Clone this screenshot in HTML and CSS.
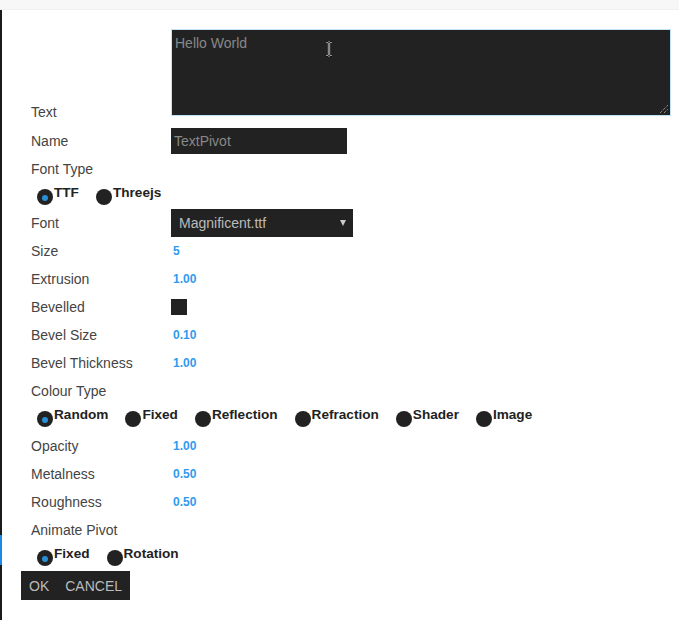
FILE: index.html
```html
<!DOCTYPE html>
<html>
<head>
<meta charset="utf-8">
<link rel="stylesheet" href="styles.css">
</head>
<body>
<div class="topbar"></div>
<div class="panel">
  <div class="edge-mark"></div>
  <form class="form">
    <div class="row row-text">
      <label class="label">Text</label>
      <div class="ta-wrap">
        <textarea class="textarea">Hello World</textarea>
        <svg class="grip" width="10" height="10" viewBox="0 0 10 10"><path d="M1 9 L9 1 M5 9 L9 5" stroke="#bbb" stroke-width="1" stroke-dasharray="1 1"/></svg>
        <svg class="ibeam" width="8" height="16" viewBox="0 0 8 16"><path d="M1 0.5 H3 Q4 0.5 4 2 V14 Q4 15.5 3 15.5 H1 M7 0.5 H5 Q4 0.5 4 2 M4 14 Q4 15.5 5 15.5 H7" fill="none" stroke="#fff" stroke-width="2.2"/><path d="M1 0.5 H3 Q4 0.5 4 2 V14 Q4 15.5 3 15.5 H1 M7 0.5 H5 Q4 0.5 4 2 M4 14 Q4 15.5 5 15.5 H7" fill="none" stroke="#111" stroke-width="1"/></svg>
      </div>
    </div>
    <div class="row row-name">
      <label class="label">Name</label>
      <input class="input" type="text" value="TextPivot">
    </div>
    <div class="row"><span class="label">Font Type</span></div>
    <div class="radios">
      <span class="radio"><span class="dot on"></span><span class="rlabel">TTF</span></span>
      <span class="radio"><span class="dot"></span><span class="rlabel">Threejs</span></span>
    </div>
    <div class="row">
      <label class="label">Font</label>
      <div class="select"><span>Magnificent.ttf</span><span class="arrow"></span></div>
    </div>
    <div class="row"><span class="label">Size</span><span class="value">5</span></div>
    <div class="row"><span class="label">Extrusion</span><span class="value">1.00</span></div>
    <div class="row"><span class="label">Bevelled</span><span class="checkbox"></span></div>
    <div class="row"><span class="label">Bevel Size</span><span class="value">0.10</span></div>
    <div class="row"><span class="label">Bevel Thickness</span><span class="value">1.00</span></div>
    <div class="row"><span class="label">Colour Type</span></div>
    <div class="radios radios-tall">
      <span class="radio"><span class="dot on"></span><span class="rlabel">Random</span></span>
      <span class="radio"><span class="dot"></span><span class="rlabel">Fixed</span></span>
      <span class="radio"><span class="dot"></span><span class="rlabel">Reflection</span></span>
      <span class="radio"><span class="dot"></span><span class="rlabel">Refraction</span></span>
      <span class="radio"><span class="dot"></span><span class="rlabel">Shader</span></span>
      <span class="radio"><span class="dot"></span><span class="rlabel">Image</span></span>
    </div>
    <div class="row"><span class="label">Opacity</span><span class="value">1.00</span></div>
    <div class="row"><span class="label">Metalness</span><span class="value">0.50</span></div>
    <div class="row"><span class="label">Roughness</span><span class="value">0.50</span></div>
    <div class="row"><span class="label">Animate Pivot</span></div>
    <div class="radios radios-tall">
      <span class="radio"><span class="dot on"></span><span class="rlabel">Fixed</span></span>
      <span class="radio"><span class="dot"></span><span class="rlabel">Rotation</span></span>
    </div>
    <div class="buttons">
      <button type="button" class="btn">OK</button>
      <button type="button" class="btn">CANCEL</button>
    </div>
  </form>
</div>
</body>
</html>
```
FILE: styles.css
```css
html, body {
  margin: 0;
  padding: 0;
  background: #fff;
}
body {
  font-family: "Liberation Sans", Arial, sans-serif;
  font-size: 14px;
  color: #444;
}
.topbar {
  height: 9px;
  background: #f7f7f7;
  border-bottom: 1px solid #f0f0f0;
}
.panel {
  position: relative;
  border-left: 2px solid #1b1b1b;
  min-height: 610px;
  box-sizing: border-box;
  padding: 19px 0 0 19px;
}
.edge-mark {
  position: absolute;
  left: -2px;
  top: 525px;
  width: 2px;
  height: 30px;
  background: #1e88e5;
}
.form {
  display: flex;
  flex-direction: column;
}
.row {
  display: flex;
  align-items: center;
  height: 28px;
}
.row-text {
  height: auto;
  align-items: flex-end;
  margin-bottom: 11px;
}
.row-text .label {
  margin-bottom: -4px;
}
.label {
  width: 150px;
  flex: none;
  box-sizing: border-box;
  padding-left: 10px;
  color: #444;
  font-size: 14px;
}
.ta-wrap {
  position: relative;
  width: 500px;
  height: 87px;
}
.textarea {
  display: block;
  width: 500px;
  height: 87px;
  box-sizing: border-box;
  margin: 0;
  padding: 5px 3px;
  background: #222;
  border: 1px solid #c2e3f5;
  color: #888;
  font-family: "Liberation Sans", Arial, sans-serif;
  font-size: 14px;
  resize: none;
  outline: none;
}
.grip {
  position: absolute;
  right: 2px;
  bottom: 2px;
}
.ibeam {
  position: absolute;
  left: 154px;
  top: 12px;
}
.input {
  width: 176px;
  height: 26px;
  box-sizing: border-box;
  margin: 0;
  padding: 0 3px;
  background: #222;
  border: none;
  color: #888;
  font-family: "Liberation Sans", Arial, sans-serif;
  font-size: 14px;
  outline: none;
}
.radios {
  display: flex;
  align-items: flex-start;
  height: 26px;
  padding-left: 16px;
  gap: 17px;
}
.radios-tall {
  height: 27px;
}
.radio {
  display: flex;
  align-items: flex-start;
  padding-top: 2px;
}
.dot {
  width: 16px;
  height: 16px;
  border-radius: 50%;
  background: #222;
  margin-top: 4px;
  margin-right: 1px;
  position: relative;
  flex: none;
}
.dot.on::after {
  content: "";
  position: absolute;
  left: 5px;
  top: 6px;
  width: 6px;
  height: 6px;
  border-radius: 50%;
  background: #2a8fd6;
}
.rlabel {
  font-weight: bold;
  font-size: 13.6px;
  color: #222;
  line-height: 15px;
}
.select {
  width: 182px;
  height: 28px;
  box-sizing: border-box;
  background: #222;
  color: #bbb;
  display: flex;
  align-items: center;
  justify-content: space-between;
  padding: 0 8px;
  font-size: 14px;
}
.arrow {
  width: 0;
  height: 0;
  border-left: 3px solid transparent;
  border-right: 3px solid transparent;
  border-top: 6px solid #ccc;
  margin-right: -1px;
}
.value {
  padding-left: 2px;
  color: #2e9bf0;
  font-size: 12px;
  font-weight: bold;
}
.checkbox {
  width: 16px;
  height: 16px;
  background: #222;
}
.buttons {
  display: flex;
  align-self: flex-start;
  background: #222;
  margin-top: 0;
}
.btn {
  background: #222;
  border: none;
  color: #bbb;
  font-family: "Liberation Sans", Arial, sans-serif;
  font-size: 14px;
  height: 29px;
  padding: 0 8px;
  margin: 0;
}
```
